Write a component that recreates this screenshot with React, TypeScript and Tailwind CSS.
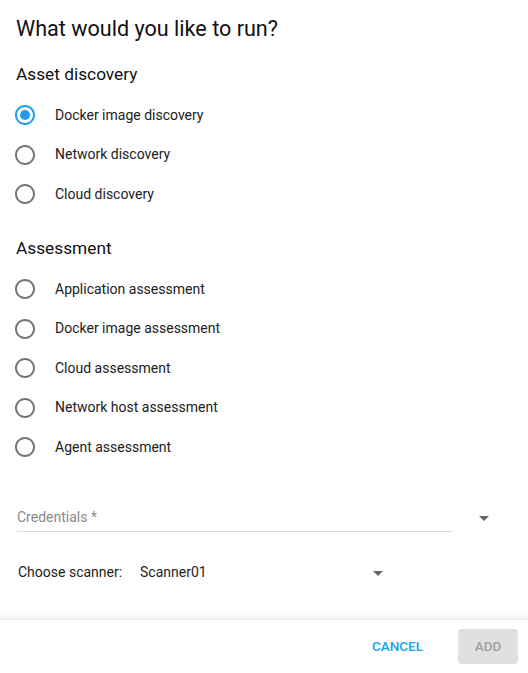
import React from 'react';

const font = { fontFamily: 'Roboto, "Liberation Sans", sans-serif' };

function Radio({ checked }: { checked?: boolean }) {
  return (
    <svg width="24" height="24" viewBox="0 0 24 24" className={checked ? 'text-[#1e9be9]' : 'text-[#757575]'}>
      <path
        fill="currentColor"
        d="M12 2C6.48 2 2 6.48 2 12s4.48 10 10 10 10-4.48 10-10S17.52 2 12 2zm0 18c-4.42 0-8-3.58-8-8s3.58-8 8-8 8 3.58 8 8-3.58 8-8 8z"
      />
      {checked && <circle cx="12" cy="12" r="5" fill="currentColor" />}
    </svg>
  );
}

function Option({ label, checked }: { label: string; checked?: boolean }) {
  return (
    <div className="flex items-center h-[39.5px]">
      <div className="w-[42px] pl-[13px]">
        <Radio checked={checked} />
      </div>
      <span className="ml-[13px] text-[14px] text-[#212121]">{label}</span>
    </div>
  );
}

function DropArrow() {
  return (
    <svg width="24" height="24" viewBox="0 0 24 24" className="text-[#666]">
      <path fill="currentColor" d="M7 10l5 5 5-5z" />
    </svg>
  );
}

export default function App() {
  return (
    <div className="w-[528px] h-[673px] bg-white flex flex-col" style={font}>
      <div className="h-[619px] pt-[13px]">
        <h1 className="px-4 text-[21.6px] leading-8 text-[#111]">What would you like to run?</h1>

        <h2 className="mt-[17px] px-4 text-[17.3px] leading-6 text-[#111]">Asset discovery</h2>
        <div className="mt-[9.25px]">
          <Option label="Docker image discovery" checked />
          <Option label="Network discovery" />
          <Option label="Cloud discovery" />
        </div>

        <h2 className="mt-[22.25px] px-4 text-[17.3px] leading-6 text-[#111]">Assessment</h2>
        <div className="mt-[9.25px]">
          <Option label="Application assessment" />
          <Option label="Docker image assessment" />
          <Option label="Cloud assessment" />
          <Option label="Network host assessment" />
          <Option label="Agent assessment" />
        </div>

        <div className="mt-[38px] flex items-start">
          <div className="ml-[17px] w-[436px] border-b border-[#dcdcdc] h-[27px] flex items-center">
            <span className="text-[14px] text-[#8a8a8a]">Credentials *</span>
          </div>
          <div className="ml-[19px] mt-[1px]">
            <DropArrow />
          </div>
        </div>

        <div className="mt-[29px] flex items-center h-6 px-[18px]">
          <span className="text-[14px] text-[#212121] w-[122px]">Choose scanner:</span>
          <span className="text-[14px] text-[#212121] w-[226px]">Scanner01</span>
          <DropArrow />
        </div>
      </div>

      <div className="relative flex-1 border-t border-[#ececec] flex items-center justify-end gap-[35px] pr-[10px]">
        <div className="absolute left-0 right-0 -top-[7px] h-[6px] bg-gradient-to-b from-transparent to-[#f2f2f2]" />
        <button className="text-[13.5px] font-medium text-[#12a5e8] h-9">CANCEL</button>
        <button className="text-[13.5px] font-medium text-[#a0a0a0] bg-[#e0e0e0] rounded w-[60px] h-[35px]">
          ADD
        </button>
      </div>
    </div>
  );
}
